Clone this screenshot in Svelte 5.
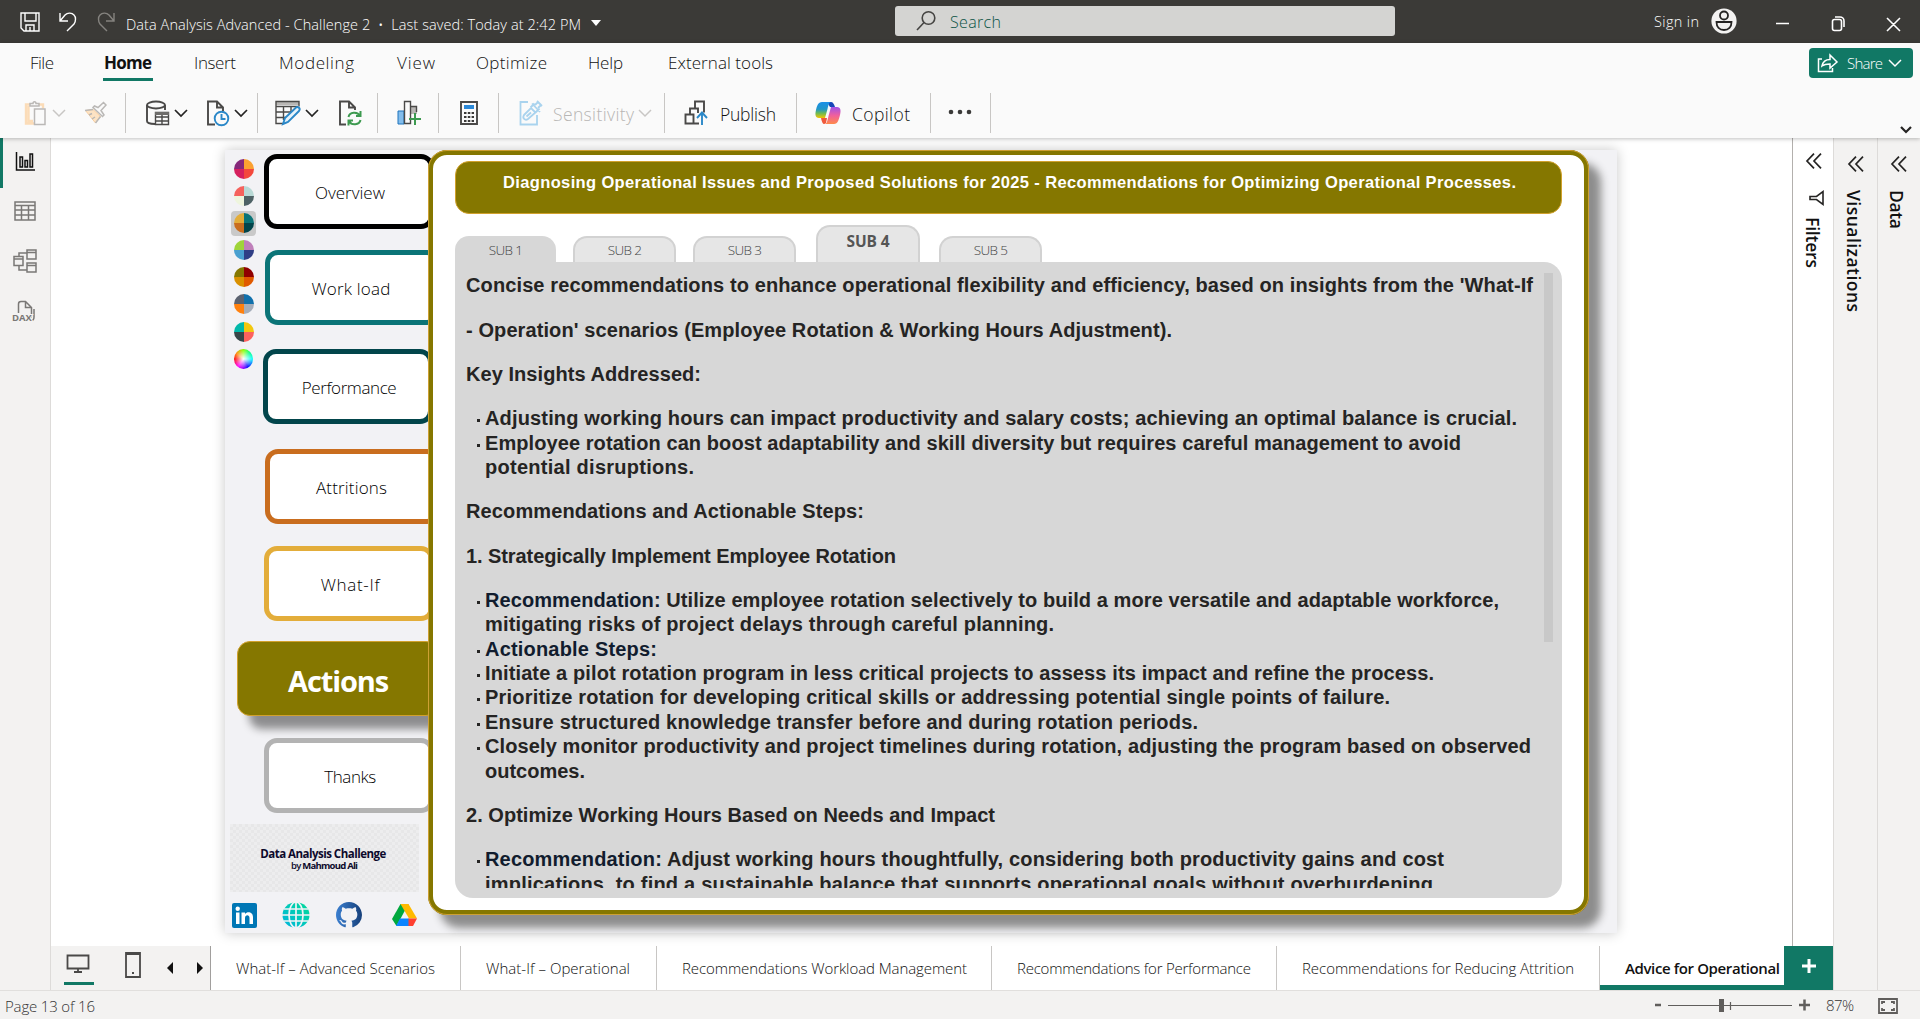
<script>
  // Spreads letter-spacing so that a single-line label fills its designed length.
  function fit(node, length) {
    const apply = () => {
      node.style.letterSpacing = '0px';
      const box = node.getBoundingClientRect();
      const vertical = getComputedStyle(node).writingMode !== 'horizontal-tb';
      const natural = vertical ? box.height : box.width;
      const count = Math.max(1, node.textContent.length - 1);
      node.style.letterSpacing = `${(length - natural) / count}px`;
    };
    apply();
    document.fonts?.ready.then(apply);
  }

  const menu = [
    ['File', 24], ['Home', 48], ['Insert', 42], ['Modeling', 75],
    ['View', 38], ['Optimize', 71], ['Help', 35], ['External tools', 105]
  ];

  const themes = [
    ['#85277a', '#fba131', '#f3483c', '#d5205e'],
    ['#f5625d', '#b9d9d6', '#4e6266', '#eef5de'],
    ['#e3ad3a', '#0b7477', '#02454b', '#c96d1e'],
    ['#9fd43a', '#bf80ba', '#2f3e85', '#4aa0d0'],
    ['#857700', '#900000', '#e05a00', '#d99000'],
    ['#5b6270', '#1070ac', '#a5adba', '#ff800e'],
    ['#01b8aa', '#f2c80f', '#fd625e', '#374649']
  ];

  const nav = [
    ['overview', 'Overview', 70], ['workload', 'Work load', 79],
    ['performance', 'Performance', 95], ['attritions', 'Attritions', 71],
    ['whatif', 'What-If', 59], ['actions', 'Actions', 101], ['thanks', 'Thanks', 52]
  ];

  const subs = [1, 2, 3, 4, 5];

  // Each block is a paragraph or a list; a line is [text, width, starts a bullet, emphasised lead].
  const blocks = [
    { lines: [["Concise recommendations to enhance operational flexibility and efficiency, based on insights from the 'What-If", 1067]] },
    { lines: [["- Operation' scenarios (Employee Rotation & Working Hours Adjustment).", 706]] },
    { lines: [['Key Insights Addressed:', 235]] },
    { list: true, lines: [
      ['Adjusting working hours can impact productivity and salary costs; achieving an optimal balance is crucial.', 1032, true],
      ['Employee rotation can boost adaptability and skill diversity but requires careful management to avoid', 976, true],
      ['potential disruptions.', 209]
    ] },
    { lines: [['Recommendations and Actionable Steps:', 398]] },
    { lines: [['1. Strategically Implement Employee Rotation', 430]] },
    { list: true, lines: [
      [' Utilize employee rotation selectively to build a more versatile and adaptable workforce,', 1014, true, 'Recommendation:'],
      ['mitigating risks of project delays through careful planning.', 569],
      ['', 172, true, 'Actionable Steps:'],
      ['Initiate a pilot rotation program in less critical projects to assess its impact and refine the process.', 949, true],
      ['Prioritize rotation for developing critical skills or addressing potential single points of failure.', 905, true],
      ['Ensure structured knowledge transfer before and during rotation periods.', 713, true],
      ['Closely monitor productivity and project timelines during rotation, adjusting the program based on observed', 1046, true],
      ['outcomes.', 100]
    ] },
    { lines: [['2. Optimize Working Hours Based on Needs and Impact', 529]] },
    { list: true, lines: [
      [' Adjust working hours thoughtfully, considering both productivity gains and cost', 959, true, 'Recommendation:'],
      ['implications, to find a sustainable balance that supports operational goals without overburdening', 948]
    ] }
  ];

  const pages = [
    ['What-If – Advanced Scenarios', 199], ['What-If – Operational', 144],
    ['Recommendations Workload Management', 285], ['Recommendations for Performance', 234],
    ['Recommendations for Reducing Attrition', 272], ['Advice for Operational', 155]
  ];
</script>

{#snippet chevron(cls)}
  <svg class="chev {cls}" width="14" height="8" viewBox="0 0 14 8"><path d="M1 1l6 6 6-6" /></svg>
{/snippet}

{#snippet collapse()}
  <svg class="collapse" width="16" height="16" viewBox="0 0 16 16"><path d="M8 .7L1 8l7 7.3M15 .7L8 8l7 7.3" /></svg>
{/snippet}

<div class="app">
  <header class="titlebar">
    <svg class="i-save" width="20" height="20" viewBox="0 0 20 20"><path d="M1 1h18v18H4l-3-3zM5 1v8h11V1M6 19v-6h8v6M10 15v4" /></svg>
    <svg class="i-undo" width="18" height="20" viewBox="0 0 18 20"><path d="M1 1v8h8M1 9l5-6c3-3 7-2 9 0s2 6 0 9l-7 7" /></svg>
    <svg class="i-redo" width="18" height="20" viewBox="0 0 18 20"><path d="M17 1v8H9M17 9l-5-6C9 0 5 1 3 3s-2 6 0 9l7 7" /></svg>
    <div class="doc"><span use:fit={455}>Data Analysis Advanced - Challenge 2 &nbsp;•&nbsp; Last saved: Today at 2:42 PM</span></div>
    <svg class="i-caret" width="10" height="6" viewBox="0 0 10 6"><path d="M0 0h10L5 6z" /></svg>
    <div class="search">
      <svg width="20" height="20" viewBox="0 0 20 20"><circle cx="12.5" cy="7" r="6.3" /><path d="M8 11.5L1 19" /></svg>
      <span use:fit={51}>Search</span>
    </div>
    <div class="signin"><span use:fit={45}>Sign in</span></div>
    <svg class="avatar" width="26" height="26" viewBox="0 0 26 26"><circle class="disc" cx="13" cy="13" r="12.6" /><circle cx="13" cy="7.5" r="4" /><path d="M5.5 14h15c0 5-3 8-7.500 8s-7.500-3-7.500-8z" /></svg>
    <svg class="win" width="126" height="16" viewBox="0 0 126 16"><path d="M1 7.500h13M57.500 5.500a2 2 0 0 1 2-2h5a2 2 0 0 1 2 2v7a2 2 0 0 1-2 2h-5a2 2 0 0 1-2-2zM60 1h5a4 4 0 0 1 4 4v6M112 2l13 13M125 2l-13 13" /></svg>
  </header>

  <section class="ribbon">
    <div class="menu-row">
      <nav class="menu">
        {#each menu as [label, width]}
          <div class="menu-item" class:active={label === 'Home'}><span use:fit={width}>{label}</span></div>
        {/each}
      </nav>
      <div class="share">
        <svg width="21" height="20" viewBox="0 0 21 20"><path d="M5 6H1.500v12.500h14V15M5 13c1-5 4-6.500 8-6.500V2l7 7-7 6v-4c-4 0-6 .5-8 2z" /></svg>
        <span use:fit={36}>Share</span>
        {@render chevron('light')}
      </div>
    </div>
    <div class="tools">
      <div class="group g1">
        <svg width="24" height="26" viewBox="0 0 24 26"><path class="paste-o" d="M10 23.500H2V4.500h4M15 4.500h4v4M4.500 6v15H9" /><path class="pale" d="M6 6V3.500h3C9 1 12 1 12 3.500h3V6zM10.500 9h10.500v15.500H10.500z" /></svg>
        {@render chevron('pale')}
        <svg class="brush" width="24" height="24" viewBox="0 0 24 24"><path class="paste-f" d="M1.500 9.500l7.500-1 7.500 7-5 6.500z" /><path class="pale" d="M9 6.500l9.500 9 1.500-1.500-3-4.500 5-5.500-2.500-2.500-5.500 5-3.500-1.500zM1 9.500l8-1M11.500 22l5-6.500M5 14l3-1.500M8 18l3-2" /></svg>
      </div>
      <div class="group g2">
        <svg width="24" height="26" viewBox="0 0 24 26"><path class="dk" d="M9 24c-5 0-8-1-8-3V5M19 5v5" /><ellipse class="dk" cx="10" cy="5" rx="9" ry="3.500" /><path class="dk thin" d="M9.500 12.500h13v12h-13zM9.500 17h13M9.500 21h13M16 15v9" /><path class="fd" d="M9 12h14v3H9z" /></svg>
        {@render chevron('')}
        <svg class="second" width="24" height="26" viewBox="0 0 24 26"><path class="dk" d="M9 24.500H2v-23h9l6 6V11M11 1.500v6h6" /><circle class="bl" cx="15.500" cy="18.500" r="6.800" /><path class="bl" d="M15.500 14v5h4" /></svg>
        {@render chevron('')}
      </div>
      <div class="group g3">
        <svg width="26" height="26" viewBox="0 0 26 26"><path class="fg" d="M1 1h23v4H1z" /><path class="dk thin" d="M8 23.500H1v-22h23v5M1 6.500h22M1 12h15M1 17.500h10M8.500 6v14M16 6v6" /><path class="bl wf" d="M8 24l2-6L21 7.500c2-1.500 5 1 3 3.500L13 22z" /></svg>
        {@render chevron('')}
        <svg class="refresh" width="25" height="26" viewBox="0 0 25 26"><path class="dk" d="M8 24.500H2v-23h9l6 6V10M11 1.500v6h6" /><path class="gr" d="M10.500 17c1-5 9-6 11.500-1M22.500 11v5H18M22.500 20c-1 5-9 6-11.500 1M10.500 25.500v-5H15" /></svg>
      </div>
      <div class="group g4">
        <svg width="25" height="26" viewBox="0 0 25 26"><path class="fb" d="M1 11h6v13H1z" /><path class="fg" d="M14 6h6v8h-6z" /><path class="dk thin" d="M7.500 1.500h6v22h-6zM13.500 6.500h6V12" /><path class="gr" d="M18 13v12M12 19h12" /></svg>
      </div>
      <div class="group g5">
        <svg width="20" height="26" viewBox="0 0 20 26"><path class="dk" d="M2 2h16v22H2z" /><path class="fbl" d="M5 5h10v4H5z" /><path class="dots" d="M5 13h10M5 17h10M5 21h10" /></svg>
      </div>
      <div class="group g6">
        <svg width="24" height="26" viewBox="0 0 24 26"><path class="sens" d="M9 2H1.500v22.500H18V15M5 15l7-7 4.500 4.500-7.500 6.500c-3 2-6-1-4-4zM7.500 16.500l4.500-4M13 3.500l8 8.500M11.500 7.500l4-4M16.500 12.500l4-4M16 5l3.500-3.500M19 8l3.500-3.500M18 1l5 5" /></svg>
        <span class="muted" use:fit={81}>Sensitivity</span>
        {@render chevron('pale')}
      </div>
      <div class="group g7">
        <svg width="25" height="26" viewBox="0 0 25 26"><path class="dk" d="M1.500 14.500h8v9h-8zM6 14V8.500h8V13M11 8V1.500h9v11M9.500 23.500H15" /><path class="bl" d="M18 25V12.500M13 18l5-5.500 5 5.500" /></svg>
        <span use:fit={56}>Publish</span>
      </div>
      <div class="group g8">
        <svg width="26" height="24" viewBox="0 0 26 24">
          <defs>
            <linearGradient id="cpA" x1="0" y1="0" x2="0" y2="1"><stop offset="0" stop-color="#1a8fe8" /><stop offset=".45" stop-color="#2196c8" /><stop offset=".7" stop-color="#6cba55" /><stop offset="1" stop-color="#f5c400" /></linearGradient>
            <linearGradient id="cpB" x1="0" y1="0" x2="0" y2="1"><stop offset="0" stop-color="#a052e8" /><stop offset=".5" stop-color="#f0609c" /><stop offset="1" stop-color="#ff8a4a" /></linearGradient>
          </defs>
          <path fill="#1646b8" d="M12 1h4c2 0 3 2 4 5h-5z" />
          <path fill="url(#cpA)" d="M7 1h9c-2 0-2.500 3-3.500 7L10 17H4c-4 0-4-4-3-8s2-8 6-8z" />
          <path fill="url(#cpB)" d="M16 6h6c4 0 4 4 3 8s-2 9-6 9h-9c2 0 2.500-4 3.500-8z" />
          <path fill="#f05a3c" d="M6 17h6l-1 5c-3 3-4-1-5-5z" />
        </svg>
        <span use:fit={58}>Copilot</span>
      </div>
      <div class="group g9">
        <svg width="26" height="6" viewBox="0 0 26 6"><circle cx="3" cy="3" r="2.300" /><circle cx="12" cy="3" r="2.300" /><circle cx="21" cy="3" r="2.300" /></svg>
      </div>
      <svg class="fold" width="12" height="8" viewBox="0 0 12 8"><path d="M1 1l5 5 5-5" /></svg>
    </div>
  </section>

  <main class="work">
    <aside class="rail">
      <div class="rail-item on"><svg width="20" height="20" viewBox="0 0 20 20"><path d="M1.500 0v18H20" /><path d="M5 5h2.500v10H5zM10 8.500h2.500V15H10zM15 2h2.500v13H15z" /></svg></div>
      <div class="rail-item"><svg width="22" height="20" viewBox="0 0 22 20"><path d="M1 1h20v18H1zM1 4.500h20M1 9h20M1 14h20M7.500 4v15M14.500 4v15" /></svg></div>
      <div class="rail-item"><svg width="24" height="24" viewBox="0 0 24 24"><path d="M1 7.500h9v9H1zM1 10h9M14 1h9v9h-9zM14 3.500h9M14 14h9v9h-9zM14 16.500h9M6 7V4h8M6 17v4h8" /></svg></div>
      <div class="rail-item"><svg width="24" height="24" viewBox="0 0 24 24"><path d="M6.500 13V4c0-2 1-2.500 2.500-2.500h4.500l6 6V15c0 2-1 3-3 3.500M13.500 2v5.500h6M22 9v8c0 2-1 4-4 4" /><text x="0" y="21">DAX</text></svg></div>
    </aside>

    <div class="center">
      <div class="stage">
        <div class="sheet">
          <div class="side">
            <div class="side-top">
              <div class="themes">
                {#each themes as [tl, tr, br, bl], i}
                  <div class="theme" class:picked={i === 2}>
                    <svg width="20" height="20" viewBox="-10 -10 20 20">
                      <path fill={tl} d="M0 0V-10A10 10 0 0 0-10 0z" /><path fill={tr} d="M0 0H10A10 10 0 0 0 0-10z" />
                      <path fill={br} d="M0 0V10A10 10 0 0 0 10 0z" /><path fill={bl} d="M0 0H-10A10 10 0 0 0 0 10z" />
                    </svg>
                  </div>
                {/each}
                <div class="theme"><i class="wheel"></i></div>
              </div>
              <nav class="nav">
                {#each nav as [key, label, width]}
                  <div class="nav-btn {key}"><span use:fit={width}>{label}</span></div>
                {/each}
              </nav>
            </div>
            <div class="credit">
              <b use:fit={126}>Data Analysis Challenge</b>
              <small><span use:fit={67}>by <b>Mahmoud Ali</b></span></small>
            </div>
            <div class="links">
              <svg width="25" height="25" viewBox="0 0 25 25"><rect width="25" height="25" rx="2" fill="#0077b5" /><path fill="#fff" d="M4 9.500h3.500V21H4zM9.500 9.500H13V11c2-3 8-2.500 8 3v7h-3.500v-6c0-4-4.500-3.500-4.500 0v6H9.500z" /><circle cx="5.700" cy="5.700" r="2.200" fill="#fff" /></svg>
              <svg width="28" height="26" viewBox="0 0 28 26"><defs><linearGradient id="gl" x1="0" y1="1" x2="1" y2="0"><stop offset="0" stop-color="#00b4e0" /><stop offset="1" stop-color="#00dc95" /></linearGradient></defs><ellipse cx="14" cy="13" rx="13.500" ry="12.700" fill="url(#gl)" /><path class="mesh" d="M14 0v26M0 13h28M2 7h24M2 19h24" /><ellipse class="mesh" cx="14" cy="13" rx="7" ry="13" /></svg>
              <svg width="26" height="26" viewBox="0 0 16 16"><defs><linearGradient id="gh"><stop offset="0" stop-color="#3b7fd0" /><stop offset="1" stop-color="#17407a" /></linearGradient></defs><path fill="url(#gh)" d="M8 0C3.580 0 0 3.580 0 8c0 3.540 2.290 6.530 5.470 7.590.4.070.55-.17.55-.38 0-.19-.01-.82-.01-1.490-2.010.37-2.530-.49-2.690-.94-.09-.23-.48-.94-.82-1.130-.28-.15-.68-.52-.01-.53.63-.01 1.080.58 1.230.82.72 1.210 1.870.87 2.330.66.07-.52.28-.87.51-1.070-1.780-.2-3.640-.89-3.640-3.950 0-.87.31-1.590.82-2.150-.08-.2-.36-1.020.08-2.120 0 0 .67-.21 2.200.82.64-.18 1.320-.27 2-.27s1.360.09 2 .27c1.530-1.040 2.200-.82 2.200-.82.44 1.100.16 1.920.08 2.120.51.56.82 1.270.82 2.150 0 3.070-1.870 3.750-3.650 3.950.29.25.54.73.54 1.480 0 1.070-.01 1.930-.01 2.200 0 .21.15.46.55.38A8 8 0 0 0 16 8c0-4.420-3.580-8-8-8z" /></svg>
              <svg width="25" height="22" viewBox="0 0 25 22"><path fill="#00a83e" d="M8.500 0h8L4.500 22 0 15z" /><path fill="#ffba00" d="M8.500 0h8L25 14.500h-8z" /><path fill="#0a84ff" d="M8 14.500h9V22H4z" /><path fill="#ff4031" d="M16.500 14.500H25L21 22h-4.500z" /></svg>
            </div>
          </div>

          <div class="frame">
            <h1><span use:fit={1013}>Diagnosing Operational Issues and Proposed Solutions for 2025 - Recommendations for Optimizing Operational Processes.</span></h1>
            <div class="subs">
              {#each subs as n}
                <div class="sub s{n}"><span use:fit={n === 4 ? 43 : 34}>SUB {n}</span></div>
              {/each}
            </div>
            <div class="panel">
              <div class="copy">
                {#each blocks as block}
                  <div class="block" class:list={block.list}>
                    {#each block.lines as [text, width, bullet, lead]}
                      <div class="line" class:bullet><span use:fit={width}>{#if lead}<em>{lead}</em>{/if}{text}</span></div>
                    {/each}
                  </div>
                {/each}
              </div>
              <div class="thumb"></div>
            </div>
          </div>
        </div>
        <aside class="filters">
          {@render collapse()}
          <svg class="funnel" width="15" height="16" viewBox="0 0 15 16"><path d="M14 1.500v13L7.500 9.500H1v-3h6.500z" /></svg>
          <span use:fit={51}>Filters</span>
        </aside>
      </div>
      <footer class="pages">
        <div class="views">
          <div class="view on"><svg width="24" height="19" viewBox="0 0 24 19"><path d="M1.500 1.500h21v13h-21zM12 15v3M8 18h8" /></svg></div>
          <svg class="phone" width="16" height="26" viewBox="0 0 16 26"><path d="M1 1h14v24H1zM1 2h14" /><path d="M7 21h2" /></svg>
          <svg class="arrow" width="6" height="12" viewBox="0 0 6 12"><path d="M6 0v12L0 6z" /></svg>
          <svg class="arrow next" width="6" height="12" viewBox="0 0 6 12"><path d="M0 0v12l6-6z" /></svg>
        </div>
        {#each pages as [label, width], i}
          <div class="page" class:current={i === 5}><span use:fit={width}>{label}</span></div>
        {/each}
        <div class="add"><svg width="14" height="14" viewBox="0 0 14 14"><path d="M7 0v14M0 7h14" /></svg></div>
      </footer>
    </div>

    <aside class="dock">{@render collapse()}<span use:fit={122}>Visualizations</span></aside>
    <aside class="dock data">{@render collapse()}<span use:fit={39}>Data</span></aside>
  </main>

  <footer class="status">
    <div class="count"><span use:fit={90}>Page 13 of 16</span></div>
    <svg class="zoom" width="156" height="16" viewBox="0 0 156 16"><path class="w2" d="M0 8h6M144 8h11M149.500 2.500v11" /><path d="M13 8.500h124M75.500 5v8" /><path class="knob" d="M64 2h5v13h-5z" /></svg>
    <div class="pct"><span use:fit={28}>87%</span></div>
    <svg class="full" width="20" height="16" viewBox="0 0 20 16"><path d="M1 1h18v14H1z" /><path d="M4 6V4h3M13 4h3v2M16 10v2h-3M7 12H4v-2" /></svg>
  </footer>
</div>

<style>
  :global(body) { margin: 0; overflow: hidden; }
  .app { width: 1920px; height: 1019px; display: flex; flex-direction: column; overflow: hidden; font: 350 17px/22px 'Open Sans', 'Noto Sans', sans-serif; color: #111; background: #fff; }
  .app * { box-sizing: border-box; }
  svg { display: block; flex: none; fill: none; overflow: visible; }
  span { white-space: nowrap; flex: none; }

  .titlebar { height: 43px; flex: none; background: #3b3a37; display: flex; align-items: flex-start; color: #fff; font-size: 14.5px; }
  .titlebar svg { stroke: #fff; stroke-width: 1.4; margin-top: 12px; }
  .i-save { margin-left: 20px; }
  .i-undo { margin-left: 19px; }
  .titlebar .i-redo { margin-left: 20px; stroke: #85837f; }
  .doc { width: 455px; margin: 14px 0 0 11px; }
  .titlebar .i-caret { fill: #fff; stroke: none; margin: 20px 0 0 10px; }
  .search { width: 500px; height: 30px; margin: 6px 0 0 294px; padding-left: 21px; display: flex; align-items: center; background: #d4d4d2; border-radius: 3px; font-size: 16px; color: #0b5345; }
  .search span { margin-top: 1px; }
  .titlebar .search svg { stroke: #454442; margin: 0 14px 0 0; stroke-width: 1.6; }
  .signin { width: 45px; margin: 11px 0 0 259px; }
  .titlebar .avatar { margin: 8px 0 0 12px; stroke: #252423; stroke-width: 1.8; }
  .avatar .disc { fill: #f3f2f1; stroke: none; }
  .titlebar .win { margin: 16px 0 0 38px; stroke-width: 1.6; }

  .ribbon { height: 95px; flex: none; background: #fafafa; box-shadow: 0 1px 4px rgba(0, 0, 0, .25); z-index: 1; }
  .menu-row { height: 42px; display: flex; justify-content: space-between; padding: 5px 7px 0 30px; }
  .menu { display: flex; }
  .menu-item { height: 33px; padding-top: 4px; margin-right: 43px; }
  .menu-item:nth-child(1) { width: 24px; margin-right: 49px; }
  .menu-item:nth-child(2) { width: 50px; margin-right: 41px; }
  .menu-item:nth-child(3) { width: 42px; margin-right: 43px; }
  .menu-item:nth-child(4) { width: 75px; margin-right: 43px; }
  .menu-item:nth-child(5) { width: 38px; margin-right: 41px; }
  .menu-item:nth-child(6) { width: 71px; margin-right: 41px; }
  .menu-item:nth-child(7) { width: 35px; margin-right: 45px; }
  .menu-item.active { font-weight: 700; border-bottom: 3px solid #117865; padding-left: 1px; }
  .share { width: 104px; height: 30px; background: #117865; border-radius: 4px; color: #fff; display: flex; align-items: center; font-size: 15px; padding-left: 8px; }
  .share svg { stroke: #fff; stroke-width: 1.5; }
  .share span { margin: 0 6px 0 9px; }

  .tools { height: 53px; display: flex; padding: 8px 8px 5px 0; font-size: 17.5px; }
  .group { height: 40px; border-right: 1px solid #c8c6c4; display: flex; align-items: center; }
  .chev { stroke: #252423; stroke-width: 1.7; margin-left: 4px; }
  .chev.pale { stroke: #c8c6c4; }
  .share .chev.light { margin: 0; stroke: #fff; }
  .g1 { width: 126px; padding-left: 24px; }
  .brush { margin-left: 18px; }
  .g2 { width: 132px; padding-left: 20px; }
  .second { margin-left: 18px; }
  .g3 { width: 120px; padding-left: 17px; }
  .refresh { margin-left: 19px; }
  .g4 { width: 61px; padding-left: 19px; }
  .g5 { width: 60px; padding-left: 20px; }
  .g6 { width: 166px; padding-left: 20px; }
  .g7 { width: 132px; padding-left: 19px; }
  .g8 { width: 134px; padding-left: 18px; }
  .g9 { width: 60px; padding: 0 0 2px 17px; }
  .g9 svg { fill: #3b3a39; }
  .g7 span, .g8 span { margin: 1px 0 0 11px; }
  .g6 span { margin: 1px 0 0 10px; }
  .muted { color: #b8b6b4; }
  .fold { stroke: #252423; stroke-width: 2.2; margin: 33px 0 0 auto; }
  .dk { stroke: #4a4948; stroke-width: 1.9; }
  .thin { stroke-width: 1.4; }
  .bl { stroke: #2b88c8; stroke-width: 1.9; }
  .wf { fill: #e8f4fb; }
  .gr { stroke: #3d9a50; stroke-width: 2; }
  .fd { fill: #6e6d6b; }
  .fg { fill: #b9b7b5; }
  .fb { fill: #83bdec; stroke: #1e74bd; }
  .fbl { fill: #2b88d8; }
  .dots { stroke: #3b3a39; stroke-width: 2.200; stroke-dasharray: 2.500 1.300; }
  .paste-o { stroke: #fbdcb8; stroke-width: 2.4; }
  .paste-f { fill: #fde3c4; stroke: #f9cfa0; }
  .pale { stroke: #bab8b6; stroke-width: 1.5; }
  .sens { stroke: #a9d3ee; stroke-width: 1.8; }

  .work { flex: 1; display: flex; min-height: 0; border-bottom: 1px solid #e1dfdd; }
  .rail { width: 51px; background: #f3f2f1; border-right: 1px solid #dddbd9; }
  .rail-item { height: 49px; display: flex; align-items: center; justify-content: center; padding-bottom: 3px; }
  .rail-item:nth-child(3) { height: 50px; }
  .rail-item:nth-child(4) { height: 52px; padding-right: 3px; }
  .rail-item svg { stroke: #7a7876; stroke-width: 1.5; }
  .rail-item text { font: 700 9.5px 'Open Sans', sans-serif; fill: #7a7876; stroke: #f3f2f1; stroke-width: 2; paint-order: stroke; }
  .rail-item.on { border-left: 3px solid #117865; height: 50px; padding: 0 3px 0 0; }
  .rail-item.on svg { stroke: #111; margin-top: -2px; }

  .center { width: 1782px; display: flex; flex-direction: column; }
  .stage { height: 808px; display: flex; }
  .sheet { width: 1392px; height: 783px; margin: 12px 175px 0 174px; background: #f2f2f5; display: flex; box-shadow: 0 0 12px rgba(0, 0, 0, .22); clip-path: inset(-12px -14px -14px -14px); }
  .side { width: 203px; flex: none; }
  .side-top { display: flex; height: 674px; }
  .themes { width: 25px; margin: 6.5px 0 0 6px; display: flex; flex-direction: column; gap: 2.1px; flex: none; }
  .theme { height: 25px; border-radius: 4px; display: grid; place-items: center; }
  .picked { background: #c9c9c9; }
  .wheel { width: 19px; height: 20px; border-radius: 50%; background: radial-gradient(circle, #fff 0, #fff0 70%), conic-gradient(#8f0, #0f8 45deg, #0ff 90deg, #00f 150deg, #80f 180deg, #f0f 215deg, #f00 270deg, #f80 310deg, #8f0); }
  .nav { width: 172px; position: relative; }
  .nav-btn { width: 170px; height: 75px; border: 5px solid; border-radius: 13px; background: #fff; display: flex; justify-content: center; align-items: center; padding: 2px 0 0 3px; margin-left: 8px; }
  .nav-btn span { color: #000; }
  .overview { border-color: #000; margin-top: 4px; padding-right: 1px; }
  .workload { border-color: #0b7477; margin: 21px 0 0 9px; width: 175px; padding: 2px 3px 0 0; }
  .performance { border-color: #02454b; margin: 24px 0 0 7px; padding-right: 1px; }
  .attritions { border-color: #c96d1e; margin: 25px 0 0 9px; width: 175px; padding-right: 5px; }
  .whatif { border-color: #e3ad3a; margin-top: 22px; }
  .actions { background: #857700; border: 1px solid #d1a12c; margin: 20px 0 0 -19px; width: 202px; padding: 5px 0 0 0; box-shadow: 12px 13px 9px rgba(0, 0, 0, .42); font-size: 29px; font-weight: 700; }
  .actions span { color: #fff; }
  .thanks { border-color: #b3b3b3; margin-top: 22px; padding-left: 2px; }
  .credit { width: 189px; height: 68px; margin-left: 5px; padding-top: 23px; background: repeating-conic-gradient(#e7e7e8 0 25%, #ededee 0 50%) 0 0 / 6px 6px; font-size: 11.5px; line-height: 13px; color: #0d0a2c; display: flex; flex-direction: column; align-items: center; }
  .credit b { white-space: nowrap; font-weight: 700; }
  .credit > b { margin-right: 3px; }
  .credit small { font-size: 9.5px; line-height: 12px; width: 67px; font-weight: 600; }
  .links { display: flex; align-items: center; height: 26px; margin: 10px 0 0 7px; }
  .links svg:nth-child(2) { margin-left: 25px; }
  .links svg:nth-child(3) { margin-left: 26px; }
  .links svg:nth-child(4) { margin-left: 30px; }
  .mesh { stroke: #f2f2f5; stroke-width: 1.7; }

  .frame { width: 1161px; height: 765px; flex: none; border-radius: 19px; background: #fff; border: 5px solid #857700; outline: 1px solid #cda034; outline-offset: -1px; box-shadow: 12px 13px 9px #8d8d8d; padding: 6px 0 0 22px; position: relative; }
  h1 { width: 1107px; height: 53px; margin: 0 0 1px; padding: 10px 0 0 47px; background: #857700; border: 1px solid #d1a12c; border-radius: 14px; color: #fff; font: 700 16.5px/20px 'Liberation Sans', Arial, sans-serif; }
  .subs { height: 47px; display: flex; align-items: flex-end; font-size: 13.5px; color: #444; }
  .sub { width: 103px; height: 26px; border: 2px solid #d2d2d2; border-bottom: 0; border-radius: 14px 14px 0 0; background: #e6e6e6; display: flex; justify-content: center; padding-top: 1px; }
  .s1 { width: 101px; background: #d7d7d7; border-color: #d7d7d7; }
  .s2 { margin-left: 17px; }
  .s3 { margin-left: 17px; }
  .s4 { margin-left: 20px; height: 37px; width: 104px; padding-top: 3px; font-weight: 700; font-size: 15.500px; color: #555; }
  .s5 { margin-left: 19px; }
  .panel { width: 1107px; height: 636px; background: #d7d7d7; border-radius: 0 18px 18px 18px; padding: 11px 9px 10px 11px; display: flex; justify-content: space-between; }
  .copy { height: 615px; overflow: hidden; padding-top: .4px; width: 1075px; font: 700 20px/24.4px 'Liberation Sans', Arial, sans-serif; color: #252423; }
  .copy em { font-style: normal; color: #111c2e; }
  .block { margin-bottom: 19.9px; }
  .line { height: 24.4px; display: flex; }
  .list .line { padding-left: 19px; }
  .list .bullet::before { content: ''; width: 3px; height: 3px; margin: 13px 5px 0 -8px; background: #252423; flex: none; }
  .thumb { width: 9px; height: 369px; background: #c8c8c8; }

  .filters { width: 41px; border-left: 1px solid #b3b0ad; padding-top: 15px; display: flex; flex-direction: column; padding-left: 13px; font-size: 17.5px; }
  .collapse { stroke: #252423; stroke-width: 1.7; }
  .funnel { stroke: #252423; stroke-width: 1.6; margin: 21px 0 0 3px; }
  .filters span, .dock span { writing-mode: vertical-rl; line-height: 20px; font-weight: 550; }
  .filters span { margin-top: 11px; margin-left: -3px; align-self: flex-start; }
  .dock { width: 44px; background: #f3f2f1; border-left: 1px solid #dddbd9; padding: 18px 0 0 14px; font-size: 17.5px; display: flex; flex-direction: column; }
  .dock.data { width: 43px; padding-left: 13px; }
  .dock span { margin-top: 18px; margin-left: -4px; align-self: flex-start; }

  .pages { height: 44px; display: flex; font-size: 15px; }
  .views { width: 160px; background: #f3f2f1; border-right: 1px solid #a19f9d; display: flex; align-items: flex-start; flex: none; }
  .views svg { stroke: #4a4948; stroke-width: 1.8; }
  .view { width: 30px; height: 39px; margin-left: 13px; padding: 8px 0 0 2px; border-bottom: 3px solid #117865; }
  .phone { margin: 6px 0 0 31px; }
  .views .arrow { fill: #111; stroke: none; margin: 16px 0 0 26px; }
  .views .next { margin-left: 24px; }
  .page { border-right: 1px solid #c8c6c4; padding: 11px 0 0 25px; flex: none; }
  .page:nth-child(2) { width: 250px; }
  .page:nth-child(3) { width: 196px; }
  .page:nth-child(4) { width: 335px; }
  .page:nth-child(5) { width: 285px; }
  .page:nth-child(6) { width: 323px; }
  .page.current { width: 184px; border-right: 0; border-bottom: 5px solid #117865; font-weight: 600; }
  .add { width: 49px; background: #117865; display: grid; place-items: center; padding-bottom: 4px; }
  .add svg { stroke: #fff; stroke-width: 3; }

  .status { height: 28px; flex: none; background: #f3f2f1; display: flex; align-items: flex-start; padding: 4px 0 0 5px; font-size: 15px; color: #333; }
  .count { width: 90px; }
  .status svg { stroke: #605e5c; }
  .zoom { margin: 2px 15px 0 1560px; stroke-width: 1.2; }
  .zoom .w2 { stroke-width: 2.5; }
  .zoom .knob { fill: #605e5c; stroke: none; }
  .pct { width: 28px; margin-top: -1px; }
  .full { margin: 3px 0 0 24px; stroke-width: 1.8; }
</style>
